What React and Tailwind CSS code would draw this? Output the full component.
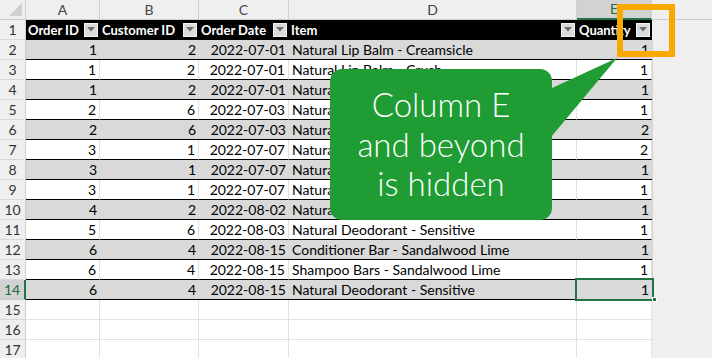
const rows = [
  [1, 2, "2022-07-01", "Natural Lip Balm - Creamsicle", 1],
  [1, 2, "2022-07-01", "Natural Lip Balm - Crush", 1],
  [1, 2, "2022-07-01", "Natural Lip Balm - Lemonade", 1],
  [2, 6, "2022-07-03", "Natural Lip Balm - Creamsicle", 1],
  [2, 6, "2022-07-03", "Natural Lip Balm - Crush", 2],
  [3, 1, "2022-07-07", "Natural Lip Balm - Lemonade", 2],
  [3, 1, "2022-07-07", "Natural Deodorant - Lavender", 1],
  [3, 1, "2022-07-07", "Natural Deodorant - Sensitive", 1],
  [4, 2, "2022-08-02", "Natural Lip Balm - Crush", 1],
  [5, 6, "2022-08-03", "Natural Deodorant - Sensitive", 1],
  [6, 4, "2022-08-15", "Conditioner Bar - Sandalwood Lime", 1],
  [6, 4, "2022-08-15", "Shampoo Bars - Sandalwood Lime", 1],
  [6, 4, "2022-08-15", "Natural Deodorant - Sensitive", 1],
];

const widths = ["w-[74px]", "w-[99px]", "w-[90px]", "w-[288px]", "w-[75px]"];

function Dropdown() {
  return (
    <span className="ml-auto mr-[2px] flex h-[14px] w-[14px] shrink-0 items-center justify-center border border-[#f4f4f4] bg-[#dcdcdc]">
      <svg width="8" height="5" viewBox="0 0 8 5">
        <polygon points="0,0 8,0 4,4.5" fill="#6e6e6e" />
      </svg>
    </span>
  );
}

function RowNum({ n, active }) {
  return (
    <div
      className={
        "flex w-[26px] shrink-0 items-center justify-center border-b border-r " +
        (active
          ? "border-b-[#c8c8c8] border-r-[#217346] border-r-2 bg-[#d2d2d2] text-[#1d6b40]"
          : "border-b-[#d8d8d8] border-r-[#cfcfcf] bg-[#efefef] text-[#333]")
      }
    >
      {n}
    </div>
  );
}

export default function App() {
  const letters = ["A", "B", "C", "D", "E"];
  const heads = ["Order ID", "Customer ID", "Order Date", "Item", "Quantity"];

  return (
    <div className="relative h-[358px] w-[712px] overflow-hidden bg-white font-['Lato','Liberation_Sans',sans-serif] text-[14px] leading-none text-black">
      {/* column letters */}
      <div className="flex h-[20px] bg-[#efefef] text-[#444]">
        <div className="relative w-[26px] shrink-0 border-b border-r border-[#cfcfcf]">
          <svg className="absolute bottom-[3px] right-[3px]" width="13" height="13" viewBox="0 0 13 13">
            <polygon points="13,0 13,13 0,13" fill="#d0d0d0" />
          </svg>
        </div>
        {letters.map((l, i) => (
          <div
            key={l}
            className={
              widths[i] +
              " flex shrink-0 items-center justify-center border-r " +
              (l === "E"
                ? "border-b-2 border-b-[#217346] border-r-[#cfcfcf] bg-[#d2d2d2] text-[#1d6b40]"
                : "border-b border-[#cfcfcf]")
            }
          >
            {l}
          </div>
        ))}
        <div className="flex-1 border-b border-[#cfcfcf]" />
      </div>

      {/* header row */}
      <div className="flex h-[20px]">
        <RowNum n={1} />
        {heads.map((h, i) => (
          <div
            key={h}
            className={widths[i] + " flex shrink-0 items-center whitespace-nowrap border-b border-black bg-black pl-[2px] text-[13px] font-bold text-white"}
          >
            <span className="leading-[16px]">{h}</span>
            <Dropdown />
          </div>
        ))}
        <div className="flex-1 bg-[#efefef]" />
      </div>

      {/* data rows */}
      {rows.map((r, idx) => {
        const n = idx + 2;
        const gray = n % 2 === 0;
        const last = n === 14;
        const cell =
          "flex shrink-0 items-center whitespace-nowrap border-b border-b-black px-[3px] " +
          (gray ? "bg-[#d9d9d9]" : "bg-white border-r border-r-[#e1e1e1]");
        return (
          <div key={n} className="flex h-[20px]">
            <RowNum n={n} active={last} />
            <div className={widths[0] + " justify-end " + cell}>{r[0]}</div>
            <div className={widths[1] + " justify-end " + cell}>{r[1]}</div>
            <div className={widths[2] + " justify-end " + cell}>{r[2]}</div>
            <div className={widths[3] + " " + cell}>{r[3]}</div>
            <div className={widths[4] + " relative justify-end " + cell}>
              {r[4]}
              {last && (
                <>
                  <div className="absolute -left-[2px] -top-[2px] h-[23px] w-[79px] border-2 border-[#217346]" />
                  <div className="absolute -bottom-[3px] -right-[5px] h-[5px] w-[5px] border border-white bg-[#217346]" />
                </>
              )}
            </div>
            <div className="flex-1 border-l border-l-[#d4d4d4] bg-[#efefef]" />
          </div>
        );
      })}

      {/* empty rows */}
      {[15, 16, 17].map((n) => (
        <div key={n} className="flex h-[20px]">
          <RowNum n={n} />
          {widths.map((w, i) => (
            <div key={i} className={w + " shrink-0 border-b border-r border-[#e1e1e1]"} />
          ))}
          <div className="flex-1 bg-[#efefef]" />
        </div>
      ))}

      {/* callout */}
      <div className="absolute left-[330px] top-[69px] h-[151px] w-[222px] rounded-[12px] bg-[#1f9c33] pt-[16px] text-center font-['Lato',sans-serif] text-[33px] font-light leading-[39.5px] text-white">
        Column E
        <br />
        and beyond
        <br />
        is hidden
      </div>
      <svg className="absolute left-[540px] top-[55px]" width="80" height="95" viewBox="0 0 80 95">
        <polygon points="4,36.7 77,3 4,90.6" fill="#1f9c33" />
      </svg>

      {/* highlight box */}
      <div className="absolute left-[617px] top-[4px] h-[53px] w-[58px] border-[6px] border-[#f9a800]" />
    </div>
  );
}
